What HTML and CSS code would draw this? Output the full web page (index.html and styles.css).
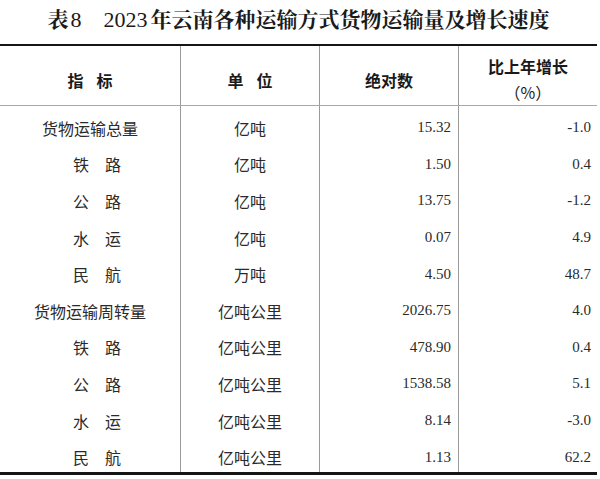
FILE: index.html
```html
<!DOCTYPE html>
<html lang="zh-CN">
<head>
<meta charset="utf-8">
<title>表8 2023年云南各种运输方式货物运输量及增长速度</title>
<link rel="stylesheet" href="styles.css">
</head>
<body>
<div class="page">
  <h1 class="title">表<span class="title-num">8</span><span class="title-gap"></span><span class="title-num">2023</span><span class="small-gap"></span>年云南各种运输方式货物运输量及增长速度</h1>
  <div class="table">
    <div class="row head">
      <div class="cell c1"><span class="spaced">指 标</span></div>
      <div class="cell c2"><span class="spaced">单 位</span></div>
      <div class="cell c3">绝对数</div>
      <div class="cell c4"><div class="two-line"><span>比上年增长</span><span class="pct">（%）</span></div></div>
    </div>
    <div class="row"><div class="cell c1">货物运输总量</div><div class="cell c2">亿吨</div><div class="cell c3 num">15.32</div><div class="cell c4 num">-1.0</div></div>
    <div class="row"><div class="cell c1 sub">铁　路</div><div class="cell c2">亿吨</div><div class="cell c3 num">1.50</div><div class="cell c4 num">0.4</div></div>
    <div class="row"><div class="cell c1 sub">公　路</div><div class="cell c2">亿吨</div><div class="cell c3 num">13.75</div><div class="cell c4 num">-1.2</div></div>
    <div class="row"><div class="cell c1 sub">水　运</div><div class="cell c2">亿吨</div><div class="cell c3 num">0.07</div><div class="cell c4 num">4.9</div></div>
    <div class="row"><div class="cell c1 sub">民　航</div><div class="cell c2">万吨</div><div class="cell c3 num">4.50</div><div class="cell c4 num">48.7</div></div>
    <div class="row"><div class="cell c1">货物运输周转量</div><div class="cell c2">亿吨公里</div><div class="cell c3 num">2026.75</div><div class="cell c4 num">4.0</div></div>
    <div class="row"><div class="cell c1 sub">铁　路</div><div class="cell c2">亿吨公里</div><div class="cell c3 num">478.90</div><div class="cell c4 num">0.4</div></div>
    <div class="row"><div class="cell c1 sub">公　路</div><div class="cell c2">亿吨公里</div><div class="cell c3 num">1538.58</div><div class="cell c4 num">5.1</div></div>
    <div class="row"><div class="cell c1 sub">水　运</div><div class="cell c2">亿吨公里</div><div class="cell c3 num">8.14</div><div class="cell c4 num">-3.0</div></div>
    <div class="row"><div class="cell c1 sub">民　航</div><div class="cell c2">亿吨公里</div><div class="cell c3 num">1.13</div><div class="cell c4 num">62.2</div></div>
  </div>
</div>
</body>
</html>
```

FILE: styles.css
```css
html, body {
  margin: 0;
  padding: 0;
  background: #ffffff;
}

.page {
  width: 597px;
  font-family: "Liberation Serif", "Noto Sans CJK SC", serif;
  color: #2a2a2a;
}

.title {
  margin: 0;
  height: 44px;
  line-height: 40px;
  text-align: center;
  font-family: "Liberation Serif", "Noto Serif CJK SC", "Noto Sans CJK SC", serif;
  font-size: 21px;
  font-weight: 700;
  color: #1a1a1a;
  white-space: nowrap;
}

.title-num {
  font-weight: 400;
  font-size: 22px;
  margin-left: 2px;
}

.title-gap {
  display: inline-block;
  width: 20px;
}

.small-gap {
  display: inline-block;
  width: 3px;
}

.table {
  border-top: 2px solid #151515;
  border-bottom: 3px solid #151515;
}

.row {
  display: grid;
  grid-template-columns: 180px 139px 139px 139px;
  height: 36.6px;
}

.row.head {
  height: 60px;
  border-bottom: 1px solid #a8a8a8;
  box-sizing: border-box;
}

.cell {
  box-sizing: border-box;
  display: flex;
  align-items: center;
  justify-content: center;
  padding-top: 7px;
  font-size: 16px;
  white-space: nowrap;
}

.head .cell {
  padding-top: 8px;
  font-weight: 700;
  color: #1a1a1a;
}

.c2, .c3, .c4 {
  border-left: 1px solid #9a9a9a;
}

.sub {
  justify-content: flex-start;
  padding-left: 73px;
}

.num {
  justify-content: flex-end;
  font-size: 15px;
}

.c3.num {
  padding-right: 7px;
}

.c4.num {
  padding-right: 6px;
}

.spaced {
  word-spacing: 9px;
}

.two-line {
  display: flex;
  flex-direction: column;
  align-items: center;
  line-height: 25px;
}

.pct {
  font-family: "Noto Sans CJK SC", sans-serif;
  font-weight: 400;
}
```
